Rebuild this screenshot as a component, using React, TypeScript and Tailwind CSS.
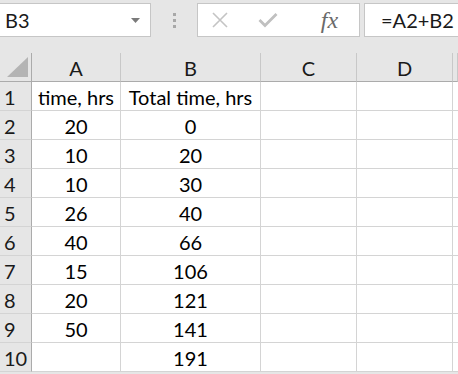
import React from 'react';

const ROWS: [string, string, string][] = [
  ['1', 'time, hrs', 'Total time, hrs'],
  ['2', '20', '0'],
  ['3', '10', '20'],
  ['4', '10', '30'],
  ['5', '26', '40'],
  ['6', '40', '66'],
  ['7', '15', '106'],
  ['8', '20', '121'],
  ['9', '50', '141'],
  ['10', '', '191'],
];

const font = { fontFamily: 'Lato, "Open Sans", sans-serif' };

function App() {
  return (
    <div className="w-[458px] h-[374px] overflow-hidden bg-[#e6e6e6] text-[#1a1a1a]" style={font}>
      {/* formula bar */}
      <div className="flex items-start h-[53px] pt-[3px]">
        <div className="w-[151px] h-[34px] bg-white border border-[#c6c6c6] border-l-0 flex items-center justify-between pl-[5px] pr-[10px]">
          <span className="text-[20px]">B3</span>
          <svg width="9" height="5" viewBox="0 0 9 5">
            <path d="M0 0h9L4.5 5z" fill="#7a7a7a" />
          </svg>
        </div>
        <div className="w-[46px] h-[34px] flex flex-col items-center justify-center gap-[3px]">
          <span className="w-[3px] h-[3px] bg-[#a8a8a8]" />
          <span className="w-[3px] h-[3px] bg-[#a8a8a8]" />
          <span className="w-[3px] h-[3px] bg-[#a8a8a8]" />
        </div>
        <div className="w-[163px] h-[34px] bg-white border border-[#c6c6c6] flex items-center">
          <div className="w-[44px] flex justify-center">
            <svg width="16" height="16" viewBox="0 0 16 16">
              <path d="M1 1l14 14M15 1L1 15" stroke="#c4c4c4" strokeWidth="1.6" />
            </svg>
          </div>
          <div className="w-[52px] flex justify-center">
            <svg width="20" height="16" viewBox="0 0 20 16">
              <path d="M1.5 8l5.5 5.5L18.5 2" stroke="#c0c0c0" strokeWidth="2.8" fill="none" />
            </svg>
          </div>
          <div className="flex-1 flex justify-center pl-[6px]">
            <span
              className="text-[24px] italic text-[#6a6a6a] leading-none"
              style={{ fontFamily: '"Liberation Serif", serif' }}
            >
              fx
            </span>
          </div>
        </div>
        <div className="ml-[4px] flex-1 h-[34px] bg-white border border-[#c6c6c6] border-r-0 flex items-center pl-[16px]">
          <span className="text-[20px]">=A2+B2</span>
        </div>
      </div>

      {/* grid */}
      <div className="grid grid-cols-[32px_89px_140px_96px_96px_5px]">
        <div className="h-[29px] border-r border-b border-[#ababab] flex items-end justify-end pr-[3px] pb-[4px]">
          <svg width="21" height="20" viewBox="0 0 21 20">
            <path d="M21 0V20H0z" fill="#b4b4b4" />
          </svg>
        </div>
        {['A', 'B', 'C', 'D', ''].map((c, i) => (
          <div
            key={i}
            className="h-[29px] border-r border-b border-r-[#c8c8c8] border-b-[#ababab] flex items-center justify-center text-[20px] pt-[2px]"
          >
            {c}
          </div>
        ))}
        {ROWS.map(([n, a, b]) => (
          <React.Fragment key={n}>
            <div className="h-[29px] border-r border-b border-r-[#ababab] border-b-[#d4d4d4] flex items-center pl-[4px] text-[20px] pt-[2px]">
              {n}
            </div>
            <div className="h-[29px] bg-white border-r border-b border-[#d4d4d4] flex items-center justify-center text-[20px] text-black pt-[2px] whitespace-nowrap">
              {a}
            </div>
            <div className="h-[29px] bg-white border-r border-b border-[#d4d4d4] flex items-center justify-center text-[20px] text-black pt-[2px] whitespace-nowrap">
              {b}
            </div>
            <div className="h-[29px] bg-white border-r border-b border-[#d4d4d4]" />
            <div className="h-[29px] bg-white border-r border-b border-[#d4d4d4]" />
            <div className="h-[29px] bg-white border-b border-[#d4d4d4]" />
          </React.Fragment>
        ))}
      </div>
    </div>
  );
}

export default App;
